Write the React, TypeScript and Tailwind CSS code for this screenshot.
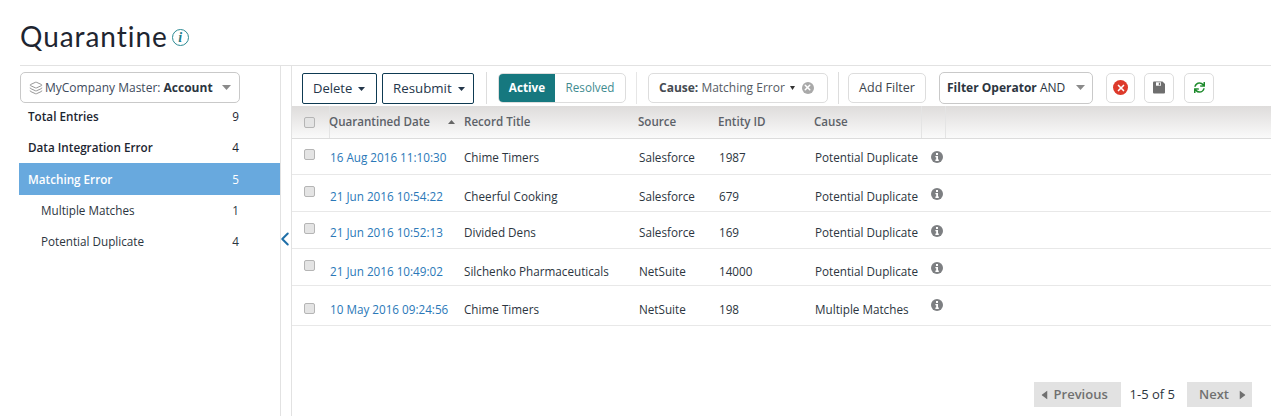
import { ChevronLeft, Layers, X } from "lucide-react";
import { FaSync } from "react-icons/fa";

const sidebar = [
  { label: "Total Entries", count: 9, h: "h-[31px]", cls: "font-semibold text-[#1c2530] pl-[9px]" },
  { label: "Data Integration Error", count: 4, h: "h-[31px]", cls: "font-semibold text-[#1c2530] pl-[9px]" },
  { label: "Matching Error", count: 5, h: "h-[32px]", cls: "font-semibold text-white bg-[#68a9de] pl-[9px] pt-px" },
  { label: "Multiple Matches", count: 1, h: "h-[31px]", cls: "text-[#2c3540] pl-[22px]" },
  { label: "Potential Duplicate", count: 4, h: "h-[31px]", cls: "text-[#2c3540] pl-[22px]" },
];

const rows = [
  { date: "16 Aug 2016 11:10:30", title: "Chime Timers", source: "Salesforce", id: "1987", cause: "Potential Duplicate", h: "h-[36px]", text: "pt-[10px]", icon: "pt-[12px]", check: "pt-[10px]" },
  { date: "21 Jun 2016 10:54:22", title: "Cheerful Cooking", source: "Salesforce", id: "679", cause: "Potential Duplicate", h: "h-[37px]", text: "pt-[13px]", icon: "pt-[13px]", check: "pt-[11px]" },
  { date: "21 Jun 2016 10:52:13", title: "Divided Dens", source: "Salesforce", id: "169", cause: "Potential Duplicate", h: "h-[37px]", text: "pt-[12px]", icon: "pt-[13px]", check: "pt-[11px]" },
  { date: "21 Jun 2016 10:49:02", title: "Silchenko Pharmaceuticals", source: "NetSuite", id: "14000", cause: "Potential Duplicate", h: "h-[37px]", text: "pt-[14px]", icon: "pt-[13px]", check: "pt-[11px]" },
  { date: "10 May 2016 09:24:56", title: "Chime Timers", source: "NetSuite", id: "198", cause: "Multiple Matches", h: "h-[40px]", text: "pt-[15px]", icon: "pt-[13px]", check: "pt-[17px]" },
];

function Caret({ className }: { className: string }) {
  return (
    <svg viewBox="0 0 10 6" preserveAspectRatio="none" className={className}>
      <path d="M0 0h10L5 6z" fill="currentColor" />
    </svg>
  );
}

function InfoDot() {
  return (
    <svg viewBox="0 0 12 12" className="w-3 h-3">
      <circle cx="6" cy="6" r="6" fill="#7d7f82" />
      <rect x="5" y="2" width="2" height="2" fill="#fff" />
      <path d="M4.4 5h2.6v3.6h.8V10H4.4V8.6h.8V6.2h-.8z" fill="#fff" />
    </svg>
  );
}

function Check() {
  return <div className="w-[11px] h-[11px] rounded-[2px] border border-[#b5b5b5] bg-[#e4e4e4]" />;
}

const cols = "grid grid-cols-[38px_134px_175px_80px_96px_116px_1fr]";

export default function App() {
  return (
    <div className="w-[1280px] h-[416px] bg-white text-[11.7px] font-['Open_Sans',sans-serif] text-[#2c3540] overflow-hidden">
      <header className="h-[65px] pl-5 pt-[19px] flex items-start gap-[4px]">
        <h1 className="text-[28px] leading-[34px] font-['Lato',sans-serif] tracking-[0.95px] text-[#1e2530]">Quarantine</h1>
        <div className="mt-[10px] w-[17px] h-[17px] rounded-full border border-[#2b8a93] text-[#1f7e88] flex items-center justify-center font-['Liberation_Serif',serif] italic font-bold text-[14px] leading-none">
          i
        </div>
      </header>

      <main className="ml-5 mr-[9px] h-[351px] border-t border-[#e2e2e2] flex">
        {/* left panel */}
        <aside className="w-[261px] -ml-px shrink-0">
          <div className="ml-px mt-[6px] w-[220px] h-[31px] rounded-[5px] border border-[#c9c9c9] flex items-center pl-[8px] pr-[8px] text-[12px] text-[#3d4a5c] relative z-10">
            <Layers className="w-[14px] h-[14px] text-[#888] mr-[2px]" strokeWidth={1.5} />
            <span>MyCompany Master:&nbsp;</span>
            <b className="font-bold text-[#2c3540]">Account</b>
            <Caret className="w-[9px] h-[5px] ml-auto text-[#8a8a8a]" />
          </div>
          <ul className="-mt-[2px]">
            {sidebar.map((s) => (
              <li key={s.label} className={`${s.h} ${s.cls} flex items-center justify-between pr-[41px]`}>
                <span>{s.label}</span>
                <span className="font-normal">{s.count}</span>
              </li>
            ))}
          </ul>
        </aside>

        {/* collapse strip */}
        <div className="w-[12px] shrink-0 border-x border-[#e2e2e2] flex flex-col items-center pt-[162px]">
          <ChevronLeft className="w-[22px] h-[22px] shrink-0 -ml-[2px] text-[#1f6fa8]" strokeWidth={2.2} />
        </div>

        <section className="flex-1 min-w-0 flex flex-col">
          {/* toolbar */}
          <div className="h-[40px] flex items-center pl-[10px] pt-[3px]">
            <button className="w-[75px] h-[31px] mt-[2px] pt-px rounded-[2px] border border-[#0e3a52] flex items-center pl-[10px] gap-[6px] text-[13px] text-[#24364a]">
              Delete <Caret className="w-[7px] h-[4px]" />
            </button>
            <button className="w-[92px] h-[31px] mt-[2px] pt-px ml-[5px] rounded-[2px] border border-[#0e3a52] flex items-center pl-[10px] gap-[6px] text-[13.3px] text-[#24364a]">
              Resubmit <Caret className="w-[7px] h-[4px]" />
            </button>
            <div className="w-px h-[32px] bg-[#ddd] ml-[12px]" />
            <div className="ml-[11px] w-[128px] h-[30px] rounded-[5px] border border-[#ddd] flex overflow-hidden">
              <div className="w-[56px] bg-[#16787f] text-white font-bold flex items-center justify-center">Active</div>
              <div className="flex-1 text-[#3f8b90] flex items-center justify-center">Resolved</div>
            </div>
            <div className="w-px h-[32px] bg-[#e6e6e6] ml-[10px]" />
            <div className="ml-[11px] w-[180px] h-[30px] rounded-[5px] border border-[#ddd] flex items-center pl-[10px] text-[12px] text-[#555b63] whitespace-nowrap">
              <b className="font-bold text-[#454b52]">Cause:</b>&nbsp;Matching Error
              <Caret className="w-[5px] h-[4px] ml-[5px] text-[#333]" />
              <span className="ml-[7px] w-[12px] h-[12px] rounded-full bg-[#a9a9a9] flex items-center justify-center">
                <X className="w-[9px] h-[9px] text-white" strokeWidth={4} />
              </span>
            </div>
            <div className="w-px h-[32px] bg-[#ddd] ml-[10px]" />
            <button className="ml-[9px] w-[78px] h-[30px] pt-[2px] rounded-[5px] border border-[#ddd] text-[12.5px] text-[#3c444d]">Add Filter</button>
            <div className="ml-[13px] w-[154px] h-[32px] rounded-[5px] border border-[#c9c9c9] flex items-center pl-[7px] pr-[7px] text-[12px] text-[#2c3540] whitespace-nowrap">
              <b className="font-bold">Filter Operator</b>&nbsp;AND
              <Caret className="w-[9px] h-[5px] ml-auto text-[#8a8a8a]" />
            </div>
            <button className="ml-[13px] w-[29px] h-[30px] rounded-[5px] border border-[#ddd] flex items-center justify-center">
              <span className="w-[15px] h-[15px] rounded-full bg-[#dd3a2b] flex items-center justify-center">
                <X className="w-[10px] h-[10px] text-white" strokeWidth={4} />
              </span>
            </button>
            <button className="ml-[9px] w-[30px] h-[30px] rounded-[5px] border border-[#ddd] flex items-center justify-center">
              <svg viewBox="0 0 12 12" className="w-[12px] h-[13px]">
                <path d="M1 0h8.5L12 2.5V11a1 1 0 0 1-1 1H1a1 1 0 0 1-1-1V1a1 1 0 0 1 1-1z" fill="#6e6e6e" />
                <rect x="3" y="0.8" width="5" height="3.4" fill="#fff" />
                <rect x="5.8" y="1.3" width="1.4" height="2.4" fill="#6e6e6e" />
              </svg>
            </button>
            <button className="ml-[10px] w-[30px] h-[30px] rounded-[5px] border border-[#ddd] flex items-center justify-center">
              <FaSync className="w-[11px] h-[11px] text-[#1c8a2b]" />
            </button>
          </div>

          {/* table head */}
          <div className={`${cols} h-[33px] border-b border-[#dcdcdc] bg-gradient-to-b from-[#dedcdb] to-[#fafafa] items-center font-semibold text-[11.6px] text-[#5c6168]`}>
            <div className="pl-[12px] h-full flex items-center border-r border-[#e4e4e4]"><Check /></div>
            <div className="flex items-center justify-between pr-[9px] -ml-px">
              <span>Quarantined Date</span>
              <Caret className="w-[7px] h-[4px] rotate-180 text-[#666]" />
            </div>
            <div>Record Title</div>
            <div className="-ml-px">Source</div>
            <div className="-ml-px">Entity ID</div>
            <div className="-ml-px">Cause</div>
            <div className="h-full border-l border-[#e4e4e4] ml-[-10px] w-[25px] border-r" />
          </div>

          {/* table rows */}
          {rows.map((r) => (
            <div key={r.date} className={`${cols} ${r.h} border-b border-[#e8e8e8] items-start leading-[16px]`}>
              <div className={`pl-[12px] ${r.check}`}><Check /></div>
              <div className={`${r.text} text-[#2a78b8]`}>{r.date}</div>
              <div className={r.text}>{r.title}</div>
              <div className={r.text}>{r.source}</div>
              <div className={r.text}>{r.id}</div>
              <div className={`${r.text} whitespace-nowrap`}>{r.cause}</div>
              <div className={r.icon}><InfoDot /></div>
            </div>
          ))}

          {/* pager */}
          <div className="flex justify-end items-center mt-[56px] pr-[19px]">
            <button className="w-[87px] h-[25px] bg-[#e2e2e2] text-[13px] text-[#707070] font-semibold flex items-center pl-[6px] gap-[5px]">
              <Caret className="w-[9px] h-[6px] rotate-90" /> Previous
            </button>
            <span className="ml-[9px] mr-[12px] text-[13px] text-[#2c3540]">1-5 of 5</span>
            <button className="w-[65px] h-[25px] bg-[#e2e2e2] text-[13px] text-[#707070] font-semibold flex items-center pl-[12px] gap-[9px]">
              Next <Caret className="w-[9px] h-[6px] -rotate-90" />
            </button>
          </div>
        </section>
      </main>
    </div>
  );
}
